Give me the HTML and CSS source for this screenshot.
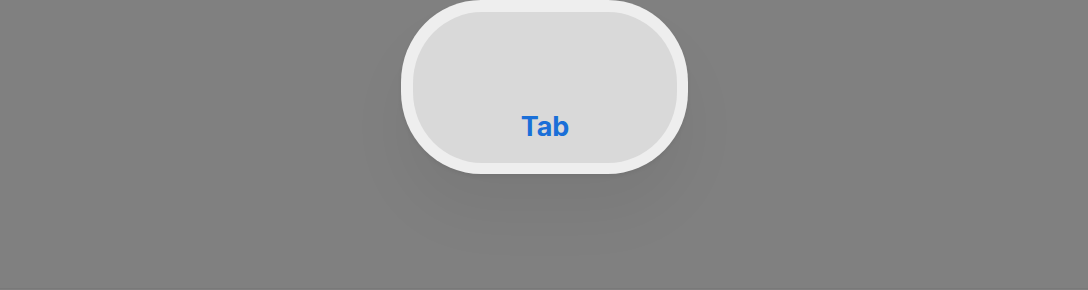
FILE: index.html
```html
<!DOCTYPE html>
<html>
<head>
<meta charset="utf-8">
<link rel="stylesheet" href="styles.css">
</head>
<body>
<div class="stage">
  <div class="pill">
    <div class="pill-inner">
      <span class="label">Tab</span>
    </div>
  </div>
</div>
</body>
</html>
```
FILE: styles.css
```css
html, body {
  margin: 0;
  padding: 0;
  background: #808080;
  width: 1088px;
  height: 290px;
  overflow: hidden;
}
.stage {
  display: flex;
  justify-content: center;
  padding-top: 0;
  padding-left: 1px;
  height: 289px;
  box-sizing: border-box;
  border-bottom: 1px solid #797979;
}
.pill {
  width: 287px;
  height: 174px;
  box-sizing: border-box;
  padding: 12px 11px 11px 12px;
  background: #eeeeee;
  border-radius: 80px / 82px;
  box-shadow: 0 40px 60px rgba(0, 0, 0, 0.05), 0 2px 4px rgba(0, 0, 0, 0.06);
  display: flex;
}
.pill-inner {
  flex: 1;
  background: #d9d9d9;
  border-radius: 69px / 71px;
  display: flex;
  flex-direction: column;
  justify-content: flex-end;
  align-items: center;
  padding-bottom: 20px;
}
.label {
  font-family: Inter, "Noto Sans", sans-serif;
  font-weight: 700;
  font-size: 27px;
  line-height: 32px;
  color: #1a6fd8;
}
```
